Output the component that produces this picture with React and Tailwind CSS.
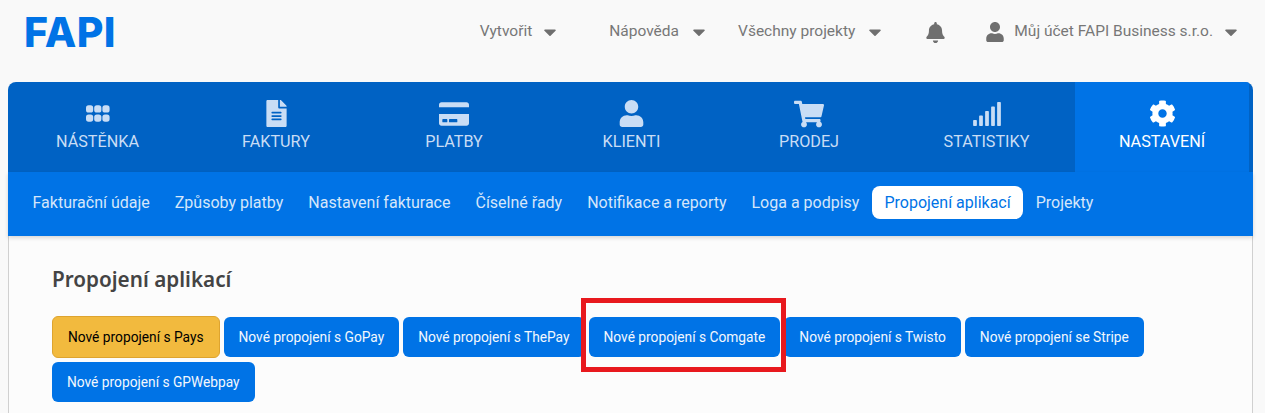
import React from "react";
import {
  FaBell,
  FaCaretDown,
  FaCog,
  FaCreditCard,
  FaFileAlt,
  FaShoppingCart,
  FaSignal,
  FaUser,
} from "react-icons/fa";

function GridIcon({ className }) {
  const dots = [];
  for (let row = 0; row < 2; row++) {
    for (let col = 0; col < 3; col++) {
      dots.push(<rect key={`${row}-${col}`} x={col * 8.2} y={row * 9.2} width="7.2" height="7.2" rx="2.6" />);
    }
  }
  return (
    <svg viewBox="0 0 24 16.4" fill="currentColor" className={className}>
      {dots}
    </svg>
  );
}

const tabs = [
  { label: "Nástěnka", width: "w-[179px]", icon: <GridIcon className="w-6 h-[17px]" /> },
  { label: "Faktury", width: "w-[178px]", icon: <FaFileAlt className="text-[27px]" /> },
  { label: "Platby", width: "w-[178px]", icon: <FaCreditCard className="text-[30px]" /> },
  { label: "Klienti", width: "w-[177px]", icon: <FaUser className="text-[27px]" /> },
  { label: "Prodej", width: "w-[178px]", icon: <FaShoppingCart className="text-[30px]" /> },
  { label: "Statistiky", width: "w-[177px]", icon: <FaSignal className="text-[30px]" /> },
  { label: "Nastavení", width: "w-[174px]", icon: <FaCog className="text-[27px]" />, active: true },
];

const subItems = [
  "Fakturační údaje",
  "Způsoby platby",
  "Nastavení fakturace",
  "Číselné řady",
  "Notifikace a reporty",
  "Loga a podpisy",
  "Propojení aplikací",
  "Projekty",
];

const buttons = ["GoPay", "ThePay", "Comgate", "Twisto"];

function BlueButton({ children }) {
  return (
    <button className="h-10 px-[15px] rounded-md bg-[#0073e6] text-[#f2f7fd] text-[13.75px] whitespace-nowrap">
      {children}
    </button>
  );
}

function HeaderLink({ label, className, caretClass }) {
  return (
    <div className={`flex items-center ${className}`}>
      <span>{label}</span>
      <FaCaretDown className={`text-[#6f6f6f] text-[20px] ${caretClass}`} />
    </div>
  );
}

export default function App() {
  return (
    <div className="h-[413px] overflow-hidden bg-[#f9f9f9] font-['Roboto',sans-serif]">
      <header className="h-[82px] flex items-start pt-[22px] text-[15.5px] text-[#777777]">
        <div className="ml-6 -mt-[20px] text-[41px] leading-[60px] font-extrabold tracking-[0.4px] text-[#0073e6] font-['Inter',sans-serif]">
          FAPI
        </div>
        <div className="ml-auto mr-[24px] flex items-center h-5">
          <HeaderLink label="Vytvořit" caretClass="ml-[8px]" />
          <HeaderLink label="Nápověda" className="ml-[49px]" caretClass="ml-[10px]" />
          <HeaderLink label="Všechny projekty" className="ml-[29px]" caretClass="ml-[10px]" />
          <FaBell className="ml-10 text-[21px] text-[#6f6f6f]" />
          <FaUser className="ml-[39px] text-[20px] text-[#6f6f6f]" />
          <HeaderLink label="Můj účet FAPI Business s.r.o." className="ml-[9px]" caretClass="ml-[8px]" />
        </div>
      </header>

      <div className="ml-2 mr-3">
        <nav className="flex h-[90px] pr-1 bg-[#0062c4] rounded-t-lg overflow-hidden">
          {tabs.map((tab) => (
            <div
              key={tab.label}
              className={`${tab.width} flex flex-col items-center ${
                tab.active ? "bg-[#0073e6] text-white" : "text-[#c9ddf5]"
              }`}
            >
              <div className="h-[27px] mt-[18px] flex items-center justify-center">{tab.icon}</div>
              <div className="mt-[5px] text-[16.2px] leading-[20px] uppercase">{tab.label}</div>
            </div>
          ))}
        </nav>

        <div className="relative h-16 px-3 pb-[3px] flex items-center bg-[#0073e6] text-base text-[#d5e6fa] shadow-[0_2px_4px_rgba(0,0,0,0.15)]">
          {subItems.map((item) => (
            <div
              key={item}
              className={
                item === "Propojení aplikací"
                  ? "h-[33px] px-[12.5px] pt-[1px] flex items-center rounded-lg bg-white text-[#0073e6]"
                  : "h-[33px] px-[12.5px] pt-[1px] flex items-center"
              }
            >
              {item}
            </div>
          ))}
        </div>

        <main className="h-[177px] px-[43px] pt-[31px] bg-[#fcfcfc] border-x border-[#d0d0d0]">
          <h1 className="text-[20.7px] leading-[24px] font-semibold text-[#444444] font-['Noto_Sans',sans-serif]">
            Propojení aplikací
          </h1>
          <div className="mt-[25px] flex flex-wrap items-center gap-1">
            <button className="h-[42px] px-[15px] rounded-md border border-[#dea42f] bg-[#f2ba3e] text-black text-[13.75px] whitespace-nowrap">
              Nové propojení s Pays
            </button>
            {buttons.map((name) =>
              name === "Comgate" ? (
                <div key={name} className="relative">
                  <BlueButton>Nové propojení s {name}</BlueButton>
                  <div className="absolute -left-2 -right-[6px] -top-[19px] -bottom-[15px] border-[5px] border-[#e8191e]" />
                </div>
              ) : (
                <BlueButton key={name}>Nové propojení s {name}</BlueButton>
              )
            )}
            <BlueButton>Nové propojení se Stripe</BlueButton>
            <BlueButton>Nové propojení s GPWebpay</BlueButton>
          </div>
        </main>
      </div>
    </div>
  );
}
